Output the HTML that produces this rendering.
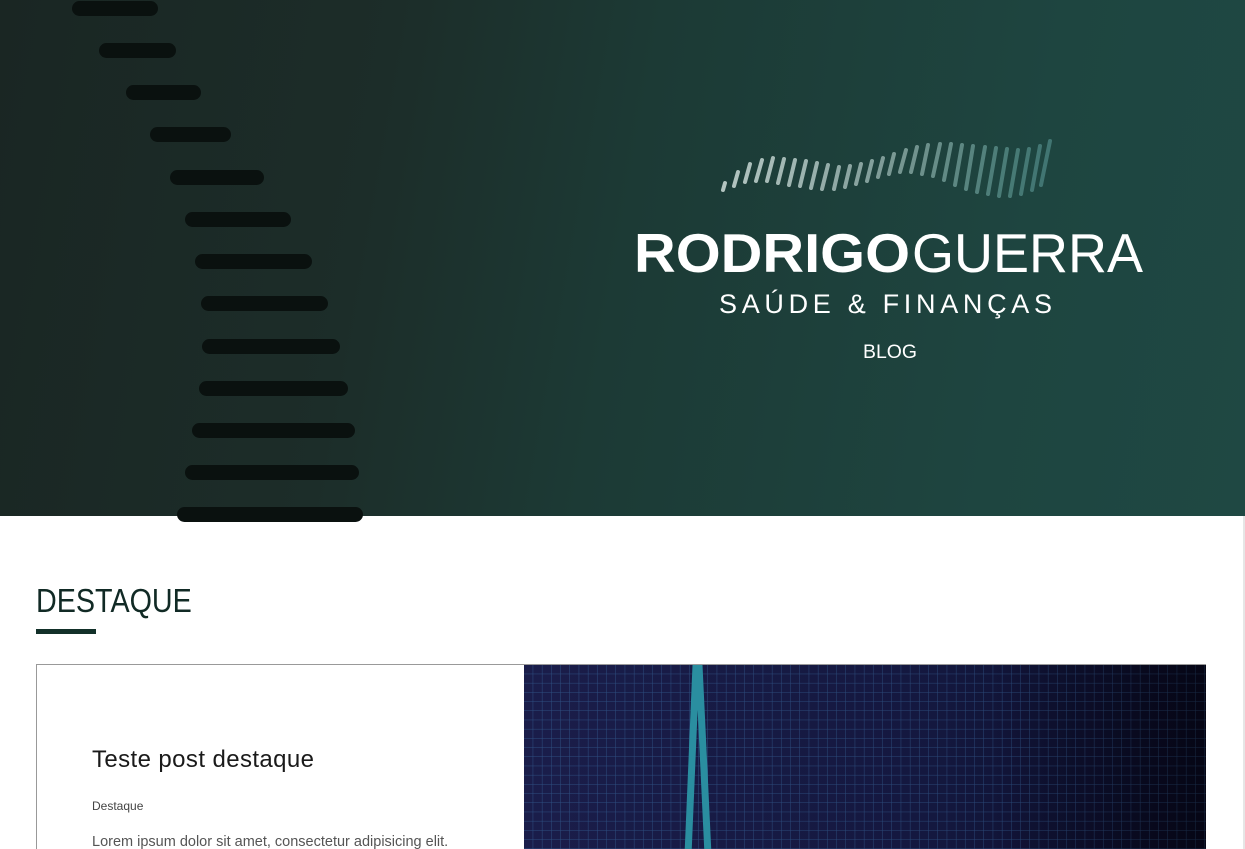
<!DOCTYPE html>
<html><head><meta charset="utf-8"><style>
*{margin:0;padding:0;box-sizing:border-box}
html,body{width:1245px;height:849px;overflow:hidden}
body{background:#fff;font-family:"Liberation Sans",sans-serif;position:relative}
.hero{position:absolute;left:0;top:0;width:1245px;height:516px;background:linear-gradient(100deg,#1a2623 0%,#1c2d29 30%,#1c3a35 50%,#1e4540 80%,#1f4843 100%)}
.d{position:absolute;height:15px;border-radius:8px;background:#0a110f}
.sb{position:absolute;left:1243px;top:516px;width:2px;height:333px;background:#e6e6e6}
h2{position:absolute;left:36px;top:582px;font-weight:normal;font-size:33px;color:#112a25;transform:scaleX(0.87);transform-origin:0 0;white-space:nowrap}
.bar{position:absolute;left:36px;top:629px;width:60px;height:5px;background:#123029}
.card{position:absolute;left:36px;top:664px;width:1170px;height:185px;border:1px solid #999;border-bottom:none;overflow:hidden}
.img{position:absolute;left:524px;top:665px;width:682px;height:184px;background:linear-gradient(90deg,#1a1d4a,#161a45 60%,#0b0c2a);overflow:hidden}
</style></head><body>
<div class="hero">
<div class="d" style="left:72px;top:1px;width:86px"></div>
<div class="d" style="left:99px;top:43px;width:77px"></div>
<div class="d" style="left:126px;top:85px;width:75px"></div>
<div class="d" style="left:150px;top:127px;width:81px"></div>
<div class="d" style="left:170px;top:170px;width:94px"></div>
<div class="d" style="left:185px;top:212px;width:106px"></div>
<div class="d" style="left:195px;top:254px;width:117px"></div>
<div class="d" style="left:201px;top:296px;width:127px"></div>
<div class="d" style="left:202px;top:339px;width:138px"></div>
<div class="d" style="left:199px;top:381px;width:149px"></div>
<div class="d" style="left:192px;top:423px;width:163px"></div>
<div class="d" style="left:185px;top:465px;width:174px"></div>
<div class="d" style="left:177px;top:507px;width:186px"></div>
<svg width="1245" height="516" style="position:absolute;left:0;top:0">
<g stroke-linecap="round" stroke-width="4" fill="none">
<line x1="723" y1="190" x2="725" y2="183" stroke="#b3c4c0"/>
<line x1="734" y1="186" x2="738" y2="172" stroke="#b0c2be"/>
<line x1="745" y1="182" x2="750" y2="164" stroke="#adc0bc"/>
<line x1="756" y1="181" x2="762" y2="160" stroke="#aabeba"/>
<line x1="767" y1="181" x2="773" y2="158" stroke="#a7bbb7"/>
<line x1="778" y1="183" x2="784" y2="159" stroke="#a3b8b4"/>
<line x1="789" y1="185" x2="795" y2="160" stroke="#a0b6b2"/>
<line x1="800" y1="186" x2="806" y2="161" stroke="#9cb3af"/>
<line x1="811" y1="188" x2="817" y2="163" stroke="#98b0ac"/>
<line x1="822" y1="189" x2="828" y2="165" stroke="#94aca8"/>
<line x1="834" y1="189" x2="839" y2="167" stroke="#90a9a5"/>
<line x1="845" y1="187" x2="850" y2="166" stroke="#8ca6a2"/>
<line x1="856" y1="184" x2="861" y2="164" stroke="#88a39f"/>
<line x1="867" y1="181" x2="872" y2="161" stroke="#83a09c"/>
<line x1="878" y1="177" x2="883" y2="158" stroke="#7f9c98"/>
<line x1="889" y1="174" x2="894" y2="154" stroke="#7a9994"/>
<line x1="900" y1="172" x2="906" y2="150" stroke="#769691"/>
<line x1="911" y1="172" x2="917" y2="147" stroke="#71938e"/>
<line x1="922" y1="174" x2="928" y2="145" stroke="#6c908b"/>
<line x1="933" y1="176" x2="940" y2="144" stroke="#678d88"/>
<line x1="944" y1="180" x2="951" y2="144" stroke="#628a85"/>
<line x1="955" y1="185" x2="962" y2="145" stroke="#5d8782"/>
<line x1="966" y1="189" x2="973" y2="146" stroke="#58847f"/>
<line x1="977" y1="192" x2="985" y2="147" stroke="#53817c"/>
<line x1="988" y1="194" x2="996" y2="148" stroke="#4e7e79"/>
<line x1="999" y1="196" x2="1007" y2="149" stroke="#4a7c77"/>
<line x1="1010" y1="196" x2="1018" y2="150" stroke="#477a75"/>
<line x1="1021" y1="194" x2="1029" y2="149" stroke="#457874"/>
<line x1="1032" y1="190" x2="1040" y2="146" stroke="#437673"/>
<line x1="1041" y1="185" x2="1050" y2="141" stroke="#417572"/>
</g>
<text x="634" y="272" font-family="Liberation Sans" font-weight="bold" font-size="55" fill="#fff" textLength="276" lengthAdjust="spacingAndGlyphs">RODRIGO</text>
<text x="912" y="272" font-family="Liberation Sans" font-size="55" fill="#fff" textLength="231" lengthAdjust="spacingAndGlyphs">GUERRA</text>
<text x="719" y="313" font-family="Liberation Sans" font-size="27" fill="#fff" textLength="333" lengthAdjust="spacing">SAÚDE &amp; FINANÇAS</text>
<text x="863" y="358" font-family="Liberation Sans" font-size="19" fill="#fff" textLength="54" lengthAdjust="spacingAndGlyphs">BLOG</text>
</svg>
</div>
<div class="sb"></div>
<h2>DESTAQUE</h2>
<div class="bar"></div>
<div class="card">
<div style="position:absolute;left:55px;top:81px;font-size:24px;color:#1a1a1a;letter-spacing:0.4px">Teste post destaque</div>
<div style="position:absolute;left:55px;top:134px;font-size:12px;color:#444">Destaque</div>
<div style="position:absolute;left:55px;top:169px;font-size:14.5px;color:#555">Lorem ipsum dolor sit amet, consectetur adipisicing elit.</div>
</div>
<div class="img">
<svg width="682" height="184" style="position:absolute;left:0;top:0">
<defs><pattern id="g" width="9.2" height="9.2" patternUnits="userSpaceOnUse"><path d="M9.2 0V9.2M0 9.2H9.2" stroke="#2e4f82" stroke-width="1" fill="none"/></pattern>
<linearGradient id="f" x1="0" x2="1"><stop offset="0" stop-color="#000" stop-opacity="0"/><stop offset=".7" stop-color="#000" stop-opacity=".1"/><stop offset="1" stop-color="#000" stop-opacity=".5"/></linearGradient></defs>
<rect width="682" height="184" fill="url(#g)"/>
<rect width="682" height="184" fill="url(#f)"/>
<path d="M164 190 L172 0 M175 0 L184 190" stroke="#2a8ea0" stroke-width="7"/>
</svg>
</div>
</body></html>
